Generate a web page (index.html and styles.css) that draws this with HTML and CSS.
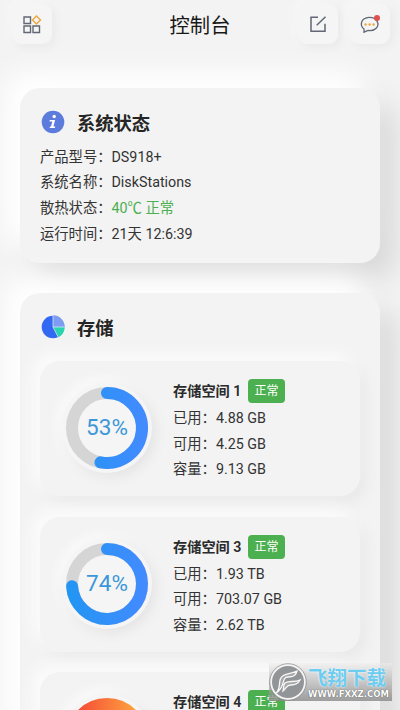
FILE: index.html
```html
<!DOCTYPE html>
<html lang="zh-CN">
<head>
<meta charset="utf-8">
<title>控制台</title>
<link rel="stylesheet" href="styles.css">
</head>
<body>
<header class="bar">
  <div class="btn">
    <svg width="20" height="20" viewBox="0 0 20 20" fill="none" stroke="#626873" stroke-width="1.4"><path d="M2 3h6.5v6.500H2zM2 12h6.500v6.500H2zM11 12h6.500v6.500H11z"/><path d="M14.500 1.900l4 4-4 4-4-4z" stroke="#eda63a"/></svg>
  </div>
  <h1>控制台</h1>
  <div class="btn">
    <svg width="20" height="20" viewBox="0 0 20 20" fill="none" stroke="#626775" stroke-width="1.500"><path d="M10 3.300H3v14h14v-7.500M8.700 11.300l8.800-8.600"/></svg>
  </div>
  <div class="btn">
    <svg width="22" height="22" viewBox="0 0 22 22" fill="none"><path d="M5 19.200V16C.500 12.500 1.600 4.800 10.200 4.300c7.700-.200 10.700 6.700 7.300 10.700-2.200 2.400-5.500 2.900-8.500 2.500z" stroke="#626775" stroke-width="1.300"/><g fill="#eda63a"><circle cx="6.600" cy="11.500" r="1.200"/><circle cx="10.600" cy="11.500" r="1.200"/><circle cx="14.600" cy="11.500" r="1.200"/></g><circle cx="18" cy="5" r="3" fill="#e0504c"/></svg>
  </div>
</header>
<main>
  <section class="card status">
    <h2>
      <svg width="24" height="24" viewBox="0 0 24 24"><circle cx="12" cy="12" r="11.300" fill="#5b7cdd"/><circle cx="13.200" cy="6.500" r="1.700" fill="#fff"/><path d="M8.800 10h5.300l-1.700 6.500h1.900l-.4 1.500H8.600l.4-1.500h1l1.300-5H8.500z" fill="#fff"/></svg>
      系统状态
    </h2>
    <p>产品型号：DS918+</p>
    <p>系统名称：DiskStations</p>
    <p>散热状态：<span class="ok">40℃ 正常</span></p>
    <p>运行时间：21天 12:6:39</p>
  </section>
  <section class="card storage">
    <h2>
      <svg width="24" height="24" viewBox="0 0 24 24"><circle cx="12" cy="12" r="11.300" fill="#3268f2"/><path d="M12 12V.3A11.700 11.700 0 0 1 23.700 12z" fill="#7f9cf3"/><path d="M12 12h11.700a11.700 11.700 0 0 1-6.400 10.200z" fill="#28d5ad"/><path d="M12 0v12h12M12 12l5.400 10.500" fill="none" stroke="#d6e6fb" stroke-width=".8"/></svg>
      存储
    </h2>
    <article class="volume">
      <div class="gauge">
        <svg width="90" height="90" viewBox="0 0 90 90" fill="none" stroke-width="12">
          <defs><linearGradient id="blue" gradientUnits="userSpaceOnUse" x1="4" y1="0" x2="86" y2="0"><stop stop-color="#2196f3"/><stop offset="1" stop-color="#448aff"/></linearGradient></defs>
          <circle cx="45" cy="45" r="35" stroke="#d5d5d5"/>
          <path d="M45 10a35 35 0 1 1-6.560 69.380" stroke="url(#blue)" stroke-linecap="round"/>
        </svg>
        <span>53%</span>
      </div>
      <div class="info">
        <h3>存储空间 1 <b>正常</b></h3>
        <p>已用：4.88 GB</p><p>可用：4.25 GB</p><p>容量：9.13 GB</p>
      </div>
    </article>
    <article class="volume">
      <div class="gauge">
        <svg width="90" height="90" viewBox="0 0 90 90" fill="none" stroke-width="12">
          <circle cx="45" cy="45" r="35" stroke="#d5d5d5"/>
          <path d="M45 10a35 35 0 1 1-34.930 37.200" stroke="url(#blue)" stroke-linecap="round"/>
        </svg>
        <span>74%</span>
      </div>
      <div class="info">
        <h3>存储空间 3 <b>正常</b></h3>
        <p>已用：1.93 TB</p><p>可用：703.07 GB</p><p>容量：2.62 TB</p>
      </div>
    </article>
    <article class="volume">
      <div class="gauge">
        <svg width="90" height="90" viewBox="0 0 90 90" fill="none" stroke-width="12">
          <defs><linearGradient id="warm"><stop stop-color="#f44336"/><stop offset="1" stop-color="#ffab40"/></linearGradient></defs>
          <circle cx="45" cy="45" r="35" stroke="url(#warm)"/>
        </svg>
      </div>
      <div class="info">
        <h3>存储空间 4 <b>正常</b></h3>
      </div>
    </article>
  </section>
</main>
<aside class="mark">
  <svg width="38" height="38" viewBox="0 0 38 38"><circle cx="19" cy="19" r="17" fill="#929598" stroke="#f4f4f4" stroke-width="2"/><circle cx="19" cy="19" r="18.300" fill="none" stroke="#888" stroke-width=".7"/><path d="M7 30c4-3 3-8 4-13 2-7 9-5 17-9-1 5-4 6-9 6-7 0-2 10-12 16zM16 20c4-3 9 0 15-3-2 4-5 5-9 5-5 0-4 3-8 6 1-4 0-6 2-8z" fill="#a8a8a8" stroke="#f8f8f8" stroke-width="1.300"/></svg>
  <div class="mark-text"><strong>飞翔下载</strong><small>WWW.FXXZ.COM</small></div>
</aside>
</body>
</html>
```
FILE: styles.css
```css
* { box-sizing: border-box; }
body {
  margin: 0;
  height: 710px;
  overflow: hidden;
  background: #f3f3f3;
  color: #333;
  font: 14.300px/25.700px Roboto, "Noto Sans CJK SC", sans-serif;
}
h1, h2, h3, p { margin: 0; }
svg { display: block; flex: none; }

.bar {
  height: 50px;
  padding: 4px 10px 0 12px;
  display: flex;
  gap: 12px;
}
.bar h1 {
  flex: 1;
  padding: 2px 0 0 50px;
  text-align: center;
  font-size: 20.300px;
  font-weight: 400;
  line-height: 40px;
  color: #181818;
}
.btn {
  width: 40px;
  height: 40px;
  border-radius: 9px;
  display: grid;
  place-items: center;
  background: #f5f5f5;
  box-shadow: 3px 3px 8px #e9e9e9, -3px -3px 8px #f9f9f9;
}

main {
  height: 660px;
  overflow: hidden;
  padding: 38px 20px 0;
  display: flex;
  flex-direction: column;
  gap: 30px;
}
.card {
  flex: none;
  border-radius: 20px;
  background: #f3f3f3;
  box-shadow: -16px -16px 28px #fff, 16px 16px 28px #d9d9d9;
}
.status { height: 175px; padding: 21px 20px 0; }
.storage { height: 555px; padding: 21px 20px 0; }
.card h2 {
  height: 30px;
  display: flex;
  align-items: center;
  gap: 12px;
  padding-left: 1px;
  font-size: 18.300px;
  font-weight: 700;
  color: #252525;
}
.status h2 { margin-bottom: 5.500px; }
.storage h2 { margin-bottom: 17px; }
.card h2 svg { position: relative; top: -2px; }
.ok { color: #4caf50; }

.volume {
  height: 135px;
  margin-bottom: 20.500px;
  padding: 17px 20px 0 22px;
  display: flex;
  gap: 21px;
  border-radius: 20px;
  background: #f3f3f3;
  box-shadow: -7px -7px 16px #fcfcfc, 6px 6px 14px #e8e8e8;
}
.gauge {
  width: 90px;
  height: 90px;
  margin-top: 5px;
  border-radius: 50%;
  display: grid;
  background: #f5f5f5;
  box-shadow: 4px 4px 12px #e4e4e4, -4px -4px 12px #fcfcfc;
}
.gauge svg, .gauge span { grid-area: 1 / 1; }
.gauge span {
  place-self: center;
  font-size: 22.500px;
  color: #3c97d9;
}
.info h3 {
  height: 28px;
  display: flex;
  align-items: center;
  gap: 6.500px;
  font-size: 14.200px;
  font-weight: 600;
  color: #2b2b2b;
}
.info h3 b {
  height: 24px;
  margin-top: -2px;
  padding: 0 6.500px;
  border-radius: 4px;
  background: #4caf50;
  color: #fff;
  font-size: 12px;
  font-weight: 400;
  line-height: 25px;
}

.mark {
  position: absolute;
  left: 269px;
  top: 663px;
  display: flex;
  align-items: center;
  width: 123px;
  height: 38px;
  background: linear-gradient(#eeeeee88, #888c);
}
.mark-text { flex: 1; display: flex; flex-direction: column; padding-left: 1px; }
.mark-text strong {
  font: 700 19.500px/25px "Noto Sans CJK SC", sans-serif;
  color: #6dcdf1;
  text-shadow: 0 0 2px #fff;
  white-space: nowrap;
}
.mark-text small {
  font: 700 8.500px/11px "DejaVu Sans", sans-serif;
  color: #fff;
  text-shadow: 0 0 1px #333;
  white-space: nowrap;
}
```
